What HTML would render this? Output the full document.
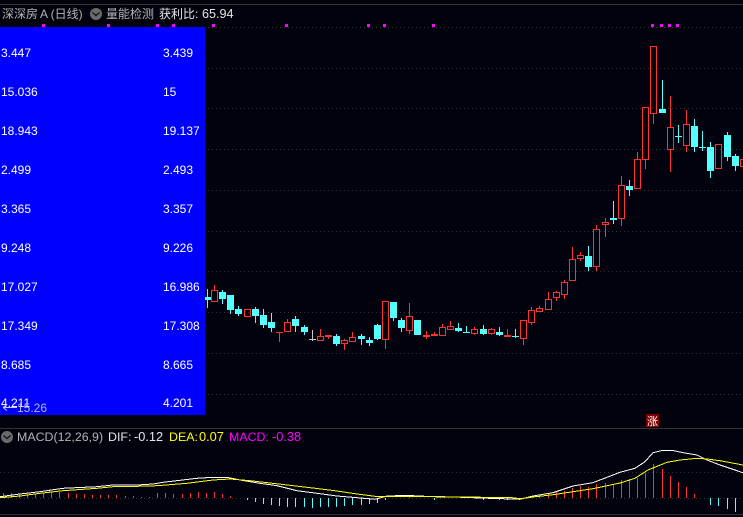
<!DOCTYPE html>
<html><head><meta charset="utf-8"><style>
html,body{margin:0;padding:0;background:#02020e;width:743px;height:517px;overflow:hidden}
svg{display:block;position:absolute;left:0;top:0}
text{font-family:"Liberation Sans","Noto Sans CJK SC",sans-serif;font-size:12px;fill:#fff}
</style></head><body>
<svg width="743" height="517" viewBox="0 0 743 517" xmlns="http://www.w3.org/2000/svg">
<rect width="743" height="517" fill="#02020e"/>
<g shape-rendering="crispEdges">
<path d="M0 4.500H743M0 428.500H743M0 514.500H743" stroke="#333" fill="none"/>
<path d="M0 27.500H743M0 68.500H743M0 108.500H743M0 149.500H743M0 190.500H743M0 231.500H743M0 271.500H743M0 312.500H743M0 353.500H743M0 394.500H743M0 472.500H743M0 498.500H743" stroke="#333" stroke-dasharray="1 3" fill="none"/>
<path fill="#f0f" d="M42 24h3v3h-3zM107 24h3v3h-3zM156 24h3v3h-3zM172 24h3v3h-3zM212 24h3v3h-3zM285 24h3v3h-3zM367 24h3v3h-3zM383 24h3v3h-3zM432 24h3v3h-3zM651 24h3v3h-3zM660 24h3v3h-3zM668 24h3v3h-3zM676 24h3v3h-3z"/>
<!-- cyan wicks -->
<path stroke="#54ffff" fill="none" d="M207.500 289V308M222.500 290V304M230.500 295V314M238.500 306V316M255.500 307V323M263.500 309V328M271.500 313V332M295.500 316V332M304.500 325V335M336.500 334V346M361.500 334V345M369.500 337V346M377.500 324V340M393.500 302V321M401.500 318V332M458.500 323V332M466.500 326V333M483.500 325V335M499.500 327V336M515.500 329V338M588.500 246V271M613.500 201V224M629.500 180V196M662.500 80V113M678.500 125V143M694.500 119V152M702.500 131V151M710.500 142V178M727.500 132V161M735.500 154V171"/>
<!-- cyan bodies -->
<path fill="#54ffff" d="M204 297h7v3h-7zM219 292h7v7h-7zM227 295h7v15h-7zM235 309h7v5h-7zM252 309h7v7h-7zM260 315h7v10h-7zM268 322h7v6h-7zM292 319h7v7h-7zM301 327h7v5h-7zM333 336h7v8h-7zM358 336h7v3h-7zM366 340h7v3h-7zM374 325h7v14h-7zM390 302h7v16h-7zM398 320h7v8h-7zM414 320h7v15h-7zM455 328h7v3h-7zM463 332h7v1h-7zM480 329h7v5h-7zM496 332h7v3h-7zM512 336h7v1h-7zM585 256h7v11h-7zM610 218h7v2h-7zM626 186h7v4h-7zM659 109h7v4h-7zM675 136h7v1h-7zM691 126h7v21h-7zM699 147h7v1h-7zM707 147h7v24h-7zM724 135h7v22h-7zM732 156h7v10h-7z"/>
<!-- red wicks -->
<path stroke="#ff3232" fill="none" d="M214.500 285V290M214.500 301V302M279.500 332V342M287.500 319V322M320.500 329V336M320.500 340V341M328.500 335V339M344.500 339V340M344.500 343V350M352.500 332V337M352.500 341V342M385.500 340V349M409.500 303V316M409.500 331V334M426.500 331V339M434.500 332V336M442.500 324V327M450.500 321V326M474.500 327V329M474.500 333V335M491.500 328V329M491.500 333V335M507.500 329V337M523.500 339V345M531.500 307V310M531.500 323V325M539.500 306V308M539.500 311V312M548.500 292V299M548.500 309V310M556.500 291V292M556.500 297V301M564.500 280V282M564.500 295V299M572.500 247V259M580.500 252V255M580.500 258V261M596.500 225V229M596.500 267V271M605.500 218V222M605.500 224V237M621.500 176V185M621.500 219V226M637.500 152V159M645.500 160V169M653.500 114V124M670.500 96V127M670.500 150V172M686.500 110V124M686.500 146V152"/>
<!-- red hollow bodies -->
<path stroke="#ff3232" fill="none" d="M211.500 290.500h6v11h-6zM244.500 309.500h6v7h-6zM284.500 322.500h6v9h-6zM317.500 336.500h6v4h-6zM341.500 340.500h6v3h-6zM349.500 337.500h6v4h-6zM382.500 301.500h6v38h-6zM406.500 316.500h6v14h-6zM439.500 327.500h6v8h-6zM447.500 326.500h6v3h-6zM471.500 329.500h6v4h-6zM488.500 329.500h6v4h-6zM520.500 320.500h6v18h-6zM528.500 310.500h6v12h-6zM536.500 308.500h6v3h-6zM545.500 299.500h6v10h-6zM553.500 292.500h6v5h-6zM561.500 282.500h6v12h-6zM569.500 259.500h6v21h-6zM577.500 255.500h6v3h-6zM593.500 229.500h6v37h-6zM602.500 222.500h6v2h-6zM618.500 185.500h6v33h-6zM634.500 159.500h6v29h-6zM642.500 107.500h6v52h-6zM650.500 46.500h6v67h-6zM667.500 127.500h6v22h-6zM683.500 124.500h6v21h-6zM715.500 144.500h6v24h-6zM740.500 159.500h6v7h-6z"/>
<!-- red solid bodies -->
<path fill="#ff3232" d="M276 332h7v1h-7zM325 335h7v2h-7zM423 335h7v2h-7zM431 334h7v2h-7zM504 335h7v2h-7z"/>
<!-- gray doji -->
<path stroke="#c8c8c8" fill="none" d="M312.500 330V341M309 339.500h7"/>
<!-- MACD histogram -->
<path stroke="#ff3232" fill="none" d="M3.500 498V493M11.500 498V493M19.500 498V494M27.500 498V494M35.500 498V494M43.500 498V493M51.500 498V492M59.500 498V492M68.500 498V493M76.500 498V494M84.500 498V494M92.500 498V495M100.500 498V495M108.500 498V495M116.500 498V495M125.500 498V496M133.500 498V496M141.500 498V497M149.500 498V497M157.500 498V493M165.500 498V493M173.500 498V494M182.500 498V494M190.500 498V493M198.500 498V492M206.500 498V493M214.500 498V492M222.500 498V494M230.500 498V496M409.500 498V497M531.500 498V497M539.500 498V496M548.500 498V494M556.500 498V492M564.500 498V491M572.500 498V488M580.500 498V486M588.500 498V487M596.500 498V484M605.500 498V483M613.500 498V484M621.500 498V480M629.500 498V479M637.500 498V478M645.500 498V473M653.500 498V464M662.500 498V469M670.500 498V476M678.500 498V482M686.500 498V487M694.500 498V494"/>
<path stroke="#54ffff" fill="none" d="M247.500 498V500M255.500 498V502M263.500 498V504M271.500 498V505M279.500 498V506M287.500 498V507M295.500 498V507M304.500 498V507M312.500 498V508M320.500 498V507M328.500 498V507M336.500 498V507M344.500 498V506M352.500 498V505M361.500 498V505M369.500 498V504M377.500 498V503M385.500 498V500M434.500 498V500M483.500 498V500M499.500 498V500M507.500 498V500M710.500 498V505M718.500 498V506M727.500 498V509M735.500 498V512"/>
<!-- MACD lines -->
<polyline fill="none" stroke="#fff" points="0,496.700 20,494 40,491.700 63,488.300 97,486.700 113,485 137,485 153,484 163,482.300 197,478.300 213,477.300 227,477.300 240,480 260,483.300 277,485.700 297,490.700 317,493.300 337,496 357,497.700 375,499.300 387,496 397,495.700 413,495.700 433,496.700 463,497.300 480,498 512,499 520,499.300 533,496 553,492.700 573,486 593,482.700 620,472.300 635,468.300 645,461.700 653,452.700 663,450.300 672,450.300 683,452.700 697,455 707,460 720,465 743,472.700"/>
<polyline fill="none" stroke="#ffff00" points="0,497.700 20,496 40,493.300 63,490.700 97,488.300 113,486.700 137,486.300 157,485.700 187,483.300 213,480 230,479 250,480.700 283,484.500 317,488.500 337,491 357,494 375,496.300 413,496.300 463,497 512,497.700 520,498.700 533,497 553,494.700 573,491.700 593,488.700 620,483 635,478.300 648,470 667,462.300 680,460 697,458.300 707,459 720,460.700 743,465"/>
</g>
<!-- blue panel -->
<rect x="0" y="27" width="205" height="388" fill="#0000ff"/>
<g>
<text x="1" y="57">3.447</text><text x="163" y="57">3.439</text>
<text x="1" y="96">15.036</text><text x="163" y="96">15</text>
<text x="1" y="135">18.943</text><text x="163" y="135">19.137</text>
<text x="1" y="174">2.499</text><text x="163" y="174">2.493</text>
<text x="1" y="213">3.365</text><text x="163" y="213">3.357</text>
<text x="1" y="252">9.248</text><text x="163" y="252">9.226</text>
<text x="1" y="291">17.027</text><text x="163" y="291">16.986</text>
<text x="1" y="330">17.349</text><text x="163" y="330">17.308</text>
<text x="1" y="369">8.685</text><text x="163" y="369">8.665</text>
<text x="1" y="407">4.211</text><text x="163" y="407">4.201</text>
</g>
<text x="17" y="412" style="fill:#b4b4e6">15.26</text>
<path d="M3 407.500h14M3 407.500l4-3M3 407.500l4 3" stroke="#c8c8f0" fill="none"/>
<!-- header -->
<text x="2" y="18" style="fill:#b4b4b4">深深房</text>
<text x="40" y="18" style="fill:#b4b4b4">A (日线)</text>
<circle cx="96" cy="14" r="6" fill="#6a6a6a"/>
<path d="M92.500 12.500l3.500 3 3.500-3" stroke="#111" stroke-width="1.300" fill="none"/>
<text x="106" y="18" style="fill:#b4b4b4">量能检测</text>
<text x="159" y="18" style="fill:#e6e6e6">获利比:</text>
<text x="202" y="18" style="fill:#e6e6e6;font-size:12.600px">65.94</text>
<!-- tag -->
<rect x="646" y="414" width="13" height="13" fill="#800000"/>
<text x="647" y="425" style="font-size:11px;fill:#fff">涨</text>
<!-- MACD header -->
<circle cx="7" cy="437" r="6" fill="#6a6a6a"/>
<path d="M3.500 435.500l3.500 3 3.500-3" stroke="#111" stroke-width="1.300" fill="none"/>
<text x="17" y="441" style="fill:#b4b4b4;font-size:12.400px">MACD(12,26,9)</text>
<text x="108" y="441" style="fill:#e6e6e6;font-size:12.400px">DIF:</text>
<text x="134" y="441" style="fill:#e6e6e6;font-size:12.800px">-0.12</text>
<text x="169" y="441" style="fill:#ffff00;font-size:12.400px">DEA:</text>
<text x="199" y="441" style="fill:#ffff00;font-size:12.800px">0.07</text>
<text x="229" y="441" style="fill:#ff00ff;font-size:12.400px">MACD:</text>
<text x="272" y="441" style="fill:#ff00ff;font-size:12.800px">-0.38</text>
</svg>
</body></html>
